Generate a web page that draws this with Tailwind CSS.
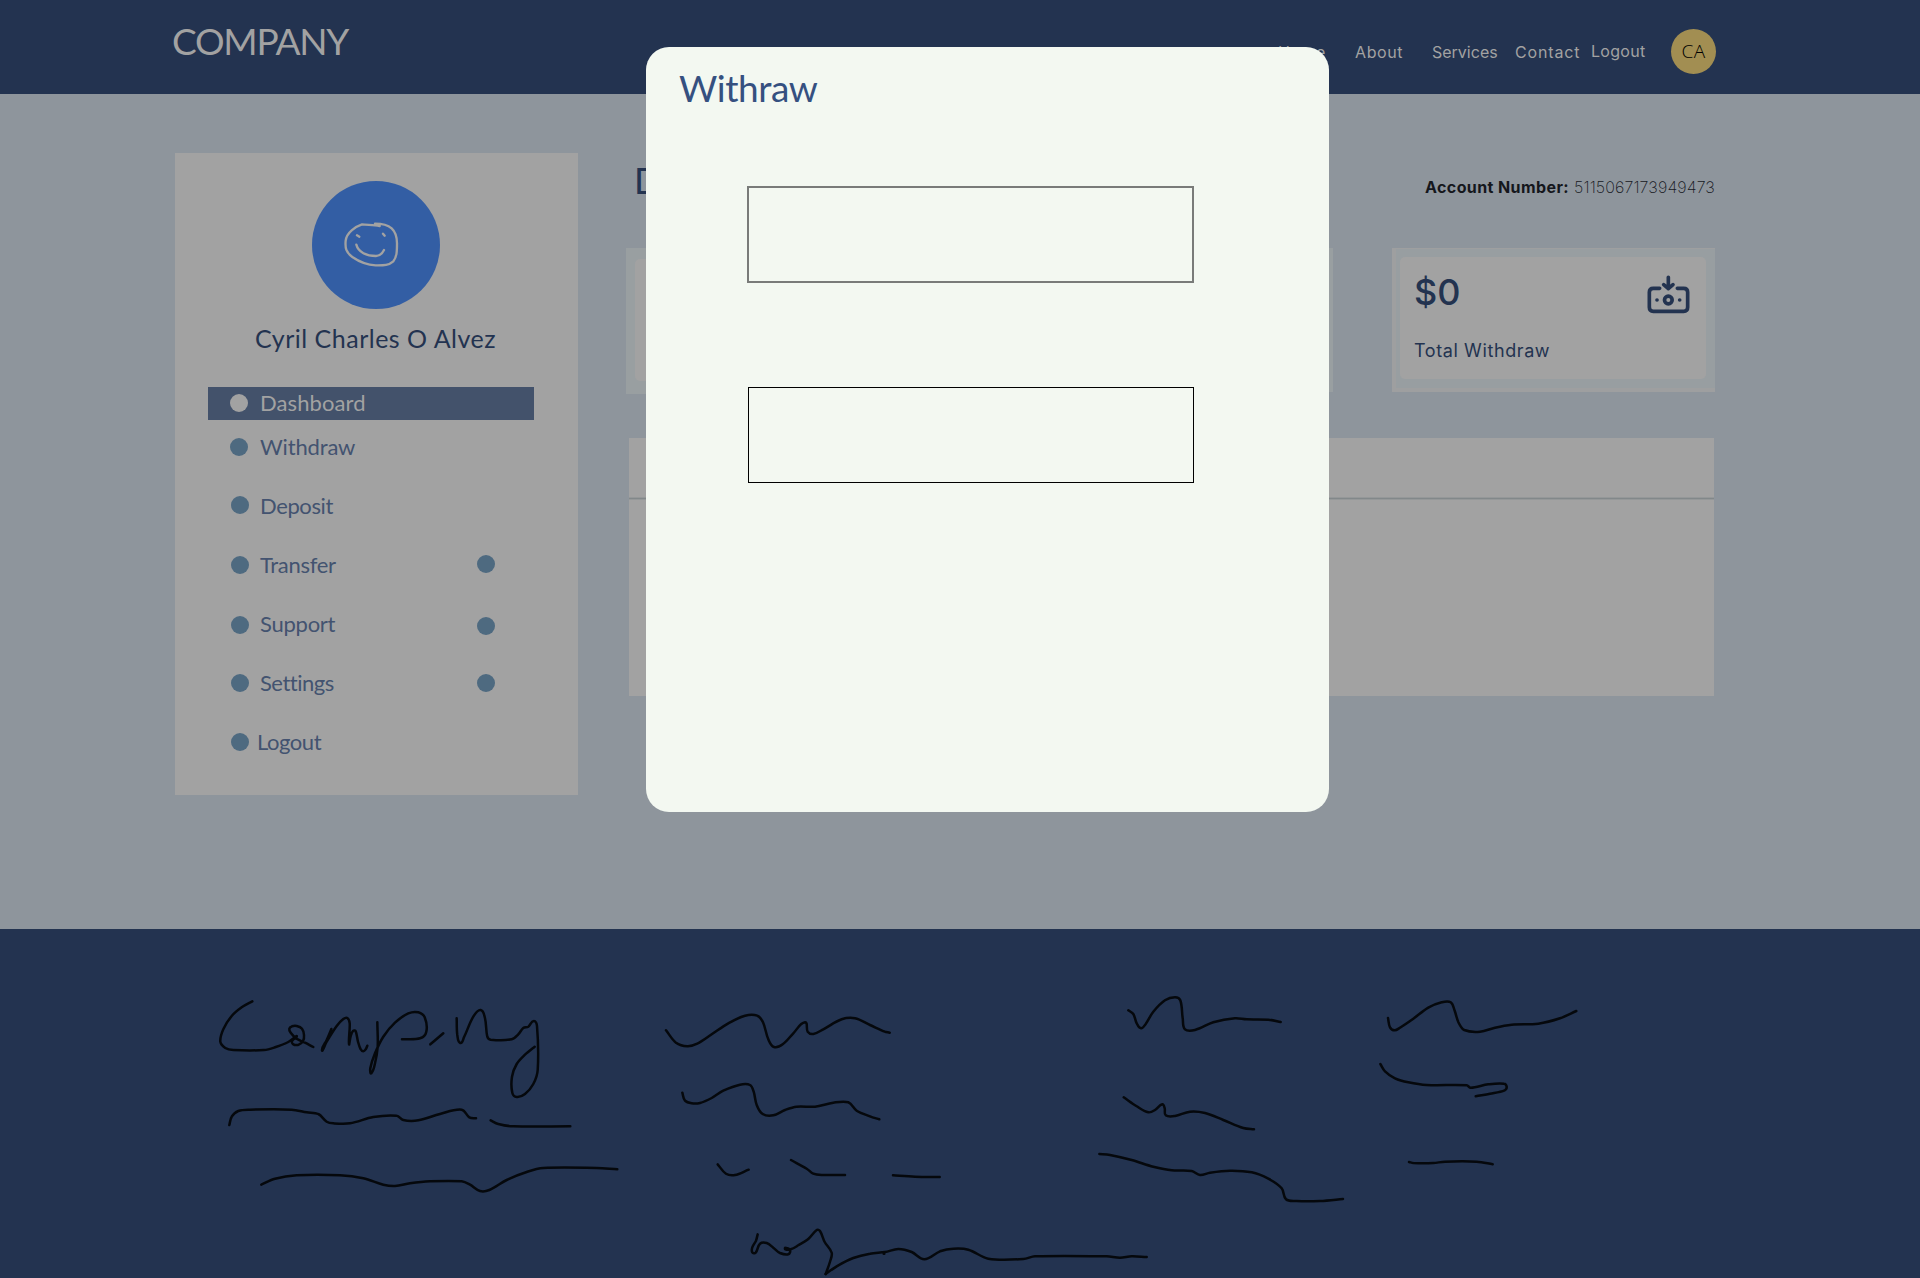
<!DOCTYPE html>
<html lang="en">
<head>
<meta charset="utf-8">
<title>Dashboard</title>
<script src="https://cdn.jsdelivr.net/npm/@tailwindcss/browser@4"></script>
</head>
<body class="relative w-[1920px] h-[1278px] overflow-hidden bg-[#8e959c] font-['Lato',sans-serif] text-[#233350]">

<header class="flex h-[94px] items-start bg-[#233350] pl-[172px] text-[#a2a2a2]">
  <div class="mt-[21px] w-[1106px] text-[37px] leading-[40px] tracking-[-1.25px] whitespace-nowrap">COMPANY</div>
  <nav class="mt-[42px] flex font-['Inter',sans-serif] text-[16px] leading-5 whitespace-nowrap">
    <div class="w-[77px] tracking-[0.8px]">Home</div>
    <div class="w-[77px] tracking-[0.6px]">About</div>
    <div class="w-[83px]">Services</div>
    <div class="w-[76px] tracking-[0.85px]">Contact</div>
    <div class="-mt-px w-[80px] tracking-[0.3px]">Logout</div>
  </nav>
  <div class="mt-[29px] flex size-[45px] items-center justify-center rounded-full bg-[#a28e52] font-['Open_Sans',sans-serif] text-[19px] font-[350] tracking-[0.3px] text-black">CA</div>
</header>

<main class="flex h-[835px] pl-[175px]">
  <aside class="mt-[59px] h-[642px] w-[403px] bg-[#a2a2a2] pt-7">
    <div class="ml-[137px] size-32 rounded-full bg-[#335ea4]">
      <svg class="size-32" viewBox="486 543 384 384" fill="none" stroke="#a2a2a2" stroke-width="7" stroke-linecap="round">
        <path d="M689 678C672 674 655 675 636 673C618 679 590 697 587 722C585 745 588 757 607 771C630 787 655 795 677 796C700 796 715 797 730 784C741 770 741 752 741 730C741 712 739 698 725 685C712 674 698 671 675 671"/>
        <path d="M619 734C625 757 650 768 678 768C692 768 697 760 702 750M621 706L628 710M699 701L704 707"/>
      </svg>
    </div>
    <div class="mt-[14px] pl-[80px] text-[25px] leading-[30px] tracking-[0.5px] whitespace-nowrap">Cyril Charles O Alvez</div>
    <nav class="mt-[34px] ml-[33px] w-[326px] text-[22px] leading-[28px] text-[#435370]">
      <div class="flex h-[33px] items-center bg-[#43526b] pl-[22px] text-[#a2a2a2]"><i class="mb-px size-[18px] rounded-full bg-[#a2a2a2]"></i><span class="mb-[2px] ml-3 tracking-[0.1px]">Dashboard</span></div>
      <div class="mb-[2px] flex h-[54px] items-center pl-[22px]"><i class="mb-px size-[18px] rounded-full bg-[#4e6a80]"></i><span class="ml-3 tracking-[-0.15px]">Withdraw</span></div>
      <div class="flex h-[59px] items-center pl-[23px]"><i class="mb-px size-[18px] rounded-full bg-[#4e6a80]"></i><span class="ml-[11px] tracking-[-0.4px]">Deposit</span></div>
      <div class="flex h-[59px] items-center pr-[39px] pl-[23px]"><i class="size-[18px] rounded-full bg-[#4e6a80]"></i><span class="ml-[11px] tracking-[-0.3px]">Transfer</span><i class="mb-px ml-auto size-[18px] rounded-full bg-[#4e6a80]"></i></div>
      <div class="flex h-[59px] items-center pr-[39px] pl-[23px]"><i class="mt-[2px] size-[18px] rounded-full bg-[#4e6a80]"></i><span class="ml-[11px] tracking-[-0.25px]">Support</span><i class="mt-[5px] ml-auto size-[18px] rounded-full bg-[#4e6a80]"></i></div>
      <div class="flex h-[59px] items-center pr-[39px] pl-[23px]"><i class="size-[18px] rounded-full bg-[#4e6a80]"></i><span class="ml-[11px] tracking-[-0.5px]">Settings</span><i class="mt-px ml-auto size-[18px] rounded-full bg-[#4e6a80]"></i></div>
      <div class="flex h-[59px] items-center pl-[23px]"><i class="size-[18px] rounded-full bg-[#4e6a80]"></i><span class="ml-2 tracking-[-0.45px]">Logout</span></div>
    </nav>
  </aside>

  <section class="ml-12 w-[1089px]">
    <div class="flex h-[154px] justify-between pt-[66px] pl-2">
      <h1 class="text-[36px] leading-10">Dashboard</h1>
      <div class="mt-[17px] flex gap-[5px] font-['Inter',sans-serif] text-[16px] leading-5 whitespace-nowrap text-[#15171c]"><span class="font-bold tracking-[0.4px]">Account Number:</span><span class="font-extralight tracking-[0.12px]">5115067173949473</span></div>
    </div>
    <div class="flex h-[190px] items-start">
      <div class="h-[146px] w-[322px] bg-[#999fa1] px-[9px] pt-[11px] pb-[13px]"><div class="h-full rounded-[5px] bg-[#a2a2a2]"></div></div>
      <div class="ml-[62px] h-[144px] w-[323px] bg-[#999fa1] px-[9px] pt-[11px] pb-[13px]"><div class="h-full rounded-[5px] bg-[#a2a2a2]"></div></div>
      <div class="ml-[59px] h-[144px] w-[323px] border-t border-b-4 border-l-4 border-[#9e9fa0] bg-[#989ea1] pt-2 pr-[9px] pb-2 pl-1">
        <div class="h-[122px] rounded-[5px] bg-[#a2a2a2] pt-[17px] pl-[14px] font-['Inter',sans-serif]">
          <div class="flex justify-between pr-[15px]">
            <span class="mt-[-2px] text-[36px] leading-10 font-medium">$0</span>
            <svg class="h-[41px] w-[45px]" viewBox="1218 132 135 123" fill="none" stroke="#233350" stroke-width="11" stroke-linecap="round" stroke-linejoin="round">
              <path d="M1259 175H1240Q1228 175 1228 187V232Q1228 244 1240 244H1331Q1343 244 1343 232V187Q1343 175 1331 175H1312"/>
              <path d="M1285 142V173M1271 164L1285 176L1299 164"/>
              <circle cx="1285" cy="210" r="11.5"/>
              <path d="M1251 210h.1M1319 210h.1"/>
            </svg>
          </div>
          <div class="mt-6 text-[18px] leading-6 tracking-[0.6px]">Total Withdraw</div>
        </div>
      </div>
    </div>
    <div class="ml-[3px] h-[258px] w-[1085px] bg-[#a2a2a2] pt-[59px]"><div class="h-[3px] border-y border-[#959899] bg-[#82888a]"></div></div>
  </section>
</main>

<footer class="h-[349px] bg-[#233350]">
  <svg class="h-[349px] w-[1920px]" viewBox="0 929 1920 349" fill="none" stroke="#05080c" stroke-width="2.5" stroke-linecap="round" stroke-linejoin="round" id="notes"></svg>
</footer>

<div class="absolute top-[47px] left-[645.5px] h-[765px] w-[683px] rounded-[23px] bg-[#f3f8f1]">
  <div class="pt-[20px] pl-[33.5px] text-[37px] leading-[42px] tracking-[-0.45px] text-[#355080]">Withraw</div>
  <div class="mt-[77px] ml-[101.5px] h-[97px] w-[447px] border-2 border-[#797b79]"></div>
  <div class="mt-[104px] ml-[102.5px] h-[96px] w-[446px] border border-black"></div>
</div>

<script>
// Handwritten strokes: each group has its origin, each stroke is a list of points in thirds of a pixel.
const groups = [
  [200, 960, [
    [157,124,125,142,95,168,70,208,61,245,76,264,100,270,192,270,225,262,265,246,290,228],
    [340,261,315,248,290,236,272,218,268,206,276,199,290,198,306,206,312,225,309,243,296,254,280,253,276,243,290,230],
    [394,207,380,240,366,270,380,245,410,198,430,177,442,174,449,190,447,252,452,228,460,212,467,214,474,245,482,268,490,274,497,268,502,257],
    [532,187,533,260,525,310,514,340,511,325,525,280,550,230,585,188,625,160,655,157,674,172,679,215,660,235,606,238],
    [691,253,730,220],
    [770,175,772,225,781,249,792,232,820,170,842,150,855,175,862,230,872,239,935,238,955,223,970,204,985,200,1001,183,1011,198,1013,330,1000,372,975,402,950,411,937,398,936,350,950,312,975,284,1004,260],
    [88,495,95,470,115,453,150,449,275,449,320,457,355,462,380,485,400,490,450,490,520,471,590,467,610,480,655,481,720,462,785,449,808,472,828,475],
    [872,481,895,492,940,499,1111,499],
    [184,674,225,656,290,646,420,646,490,655,550,674,585,678,630,670,690,664,785,664,810,674,840,693,868,690,920,660,980,636,1030,624,1190,624,1252,628]]],
  [640, 980, [
    [78,151,108,188,142,199,172,191,215,163,265,130,315,107,352,107,369,127,385,178,402,201,428,193,460,160,495,127,503,155,520,162,550,148,605,118,645,115,690,135,735,155,749,158],
    [127,338,135,362,155,370,180,369,215,354,250,332,300,314,330,315,341,335,350,375,368,402,400,406,435,390,470,380,525,380,580,368,625,367,650,392,690,409,718,418],
    [233,553,258,581,285,585,326,569],
    [453,540,500,566,520,581,545,585,615,585],
    [759,586,825,590,899,591]]],
  [730, 1200, [
    [83,103,78,122,67,142,67,157,77,158,90,131,110,129,130,143,150,159,175,163,180,150,166,143,166,148,182,148,205,136,235,117,260,90,270,93,284,126,305,158,300,185,287,222],
    [287,222,320,199,370,174,420,161,465,156,505,147,545,156,583,178,630,154,670,146,715,149,775,176,880,177,915,169,1130,169,1170,173,1205,169,1250,171],
    [461,161,463,161]]],
  [1080, 970, [
    [145,121,160,132,170,160,183,175,197,162,220,125,255,91,285,82,301,91,308,145,315,178,345,180,400,157,465,145,500,148,565,149,602,156],
    [131,382,170,409,205,427,225,420,247,403,254,415,257,436,285,438,330,425,375,429,430,450,490,474,522,478],
    [58,552,90,555,155,570,220,590,275,601,335,603,360,615,390,608,450,602,515,607,565,626,605,655,618,688,650,693,720,693,789,687]]],
  [1350, 970, [
    [114,144,120,172,134,181,150,173,190,146,235,113,275,97,302,97,314,122,325,156,343,180,390,185,435,173,485,164,565,161,630,145,679,123],
    [91,282,105,304,135,325,175,337,230,345,350,346,362,353,415,343,462,341,470,350,464,361,420,371,377,379],
    [177,576,190,579,250,579,285,575,380,575,428,583]]]
];
const svg = document.getElementById('notes');
for (const [ox, oy, strokes] of groups) for (const s of strokes) {
  const p = [];
  for (let i = 0; i < s.length; i += 2) p.push([ox + s[i] / 3, oy + s[i + 1] / 3]);
  let d = 'M' + p[0];
  for (let i = 0; i < p.length - 1; i++) {
    const a = p[i - 1] || p[i], b = p[i], c = p[i + 1], e = p[i + 2] || c;
    const len = Math.hypot(c[0] - b[0], c[1] - b[1]);
    // tangents are limited by the segment's own length so long flats do not overshoot
    const t = (u, v) => { const l = Math.hypot(v[0] - u[0], v[1] - u[1]) || 1; return [(v[0] - u[0]) / l * len / 3, (v[1] - u[1]) / l * len / 3]; };
    const m = t(a, c), n = t(b, e);
    d += 'C' + [b[0] + m[0], b[1] + m[1], c[0] - n[0], c[1] - n[1], c[0], c[1]].map(v => v.toFixed(1)).join(' ');
  }
  const el = document.createElementNS('http://www.w3.org/2000/svg', 'path');
  el.setAttribute('d', d);
  svg.appendChild(el);
}
</script>
</body>
</html>
